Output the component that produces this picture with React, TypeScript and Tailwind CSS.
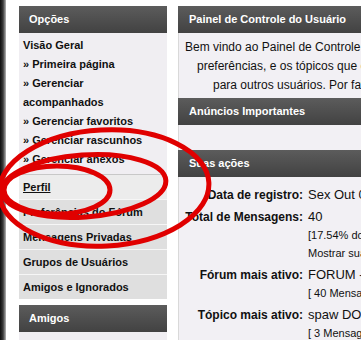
import React from "react";

const headerCls =
  "flex h-[27px] items-center bg-gradient-to-b from-[#5c5c5c] to-[#424242] text-[11px] font-bold text-white";

const menuRows = [
  { label: "Preferências do Fórum" },
  { label: "Mensagens Privadas" },
  { label: "Grupos de Usuários" },
  { label: "Amigos e Ignorados" },
];

function Sidebar() {
  return (
    <aside className="w-[148px] shrink-0">
      <div className={`${headerCls} pl-[10px]`}>Opções</div>
      <ul className="bg-[#f0eef2] px-[4px] pt-[3px] pb-[5px] text-[11px] font-bold leading-[19px]">
        <li>Visão Geral</li>
        <li>» Primeira página</li>
        <li>
          » Gerenciar
          <br />
          acompanhados
        </li>
        <li>» Gerenciar favoritos</li>
        <li>» Gerenciar rascunhos</li>
        <li>» Gerenciar anexos</li>
      </ul>
      <div className="flex h-[25px] items-center border-t border-[#c8c8c8] bg-[#ececec] px-[4px] text-[11px] font-bold underline">
        Perfil
      </div>
      {menuRows.map((r) => (
        <div
          key={r.label}
          className="flex h-[25px] items-center border-t border-[#f6f6f6] bg-[#dfdfdf] px-[4px] text-[11px] font-bold"
        >
          {r.label}
        </div>
      ))}
      <div className={`${headerCls} mt-[6px] pl-[10px]`}>Amigos</div>
      <div className="h-[20px] bg-[#f0eef2]" />
    </aside>
  );
}

const stats = [
  { label: "Data de registro:", lines: ["Sex Out 09, 2009 2:13 pm"] },
  {
    label: "Total de Mensagens:",
    lines: ["40", "[17.54% do total / 0.09 mensagens por dia]", "Mostrar suas mensagens"],
  },
  { label: "Fórum mais ativo:", lines: ["FORUM - Geral", "[ 40 Mensagens / 100.00% de suas mensagens ]"] },
  { label: "Tópico mais ativo:", lines: ["spaw DOWNLOAD", "[ 3 Mensagens / 7.50% de suas mensagens ]"] },
];

function Main() {
  return (
    <main className="w-[560px] shrink-0">
      <div className={`${headerCls} pl-[11px]`}>Painel de Controle do Usuário</div>
      <div className="border-l border-[#d9d9d9] bg-[#f2f0f4] pt-[5px] pb-[3px] text-[12px] leading-[19px] whitespace-nowrap">
        <p className="pl-[6px]">
          Bem vindo ao Painel de Controle do Usuário. Aqui você pode monitorar, ver e atualizar seu perfil,
        </p>
        <p className="pl-[18px]">
          preferências, e os tópicos que está acompanhando. Você também pode enviar mensagens
        </p>
        <p className="pl-[34px]">para outros usuários. Por favor, escolha uma opção no menu.</p>
      </div>
      <div className={`${headerCls} pl-[11px]`}>Anúncios Importantes</div>
      <div className="h-[25px] border-l border-[#d9d9d9] bg-[#f2f0f4]" />
      <div className={`${headerCls} pl-[11px]`}>Suas ações</div>
      <div className="border-l border-[#d9d9d9] bg-[#f2f0f4] pt-[7px] pb-[10px]">
        {stats.map((s) => (
          <div key={s.label} className="flex gap-[5px] py-[2px] leading-[18px] whitespace-nowrap">
            <div className="w-[124px] shrink-0 text-right text-[12px] font-bold">{s.label}</div>
            <div>
              {s.lines.map((l, i) => (
                <div key={i} className={i === 0 ? "text-[13px]" : "text-[11px]"}>
                  {l}
                </div>
              ))}
            </div>
          </div>
        ))}
      </div>
    </main>
  );
}

export default function App() {
  return (
    <div className="relative h-[340px] w-[361px] overflow-hidden bg-white font-['Liberation_Sans',Arial,sans-serif] text-[#111]">
      <div className="flex h-full">
        <div className="w-[6px] shrink-0 bg-gradient-to-r from-[#0d0d0d] via-[#3a3a3a] to-[#b8b8b8]" />
        <div className="flex gap-[11px] pl-[13px] pt-[6px]">
          <Sidebar />
          <Main />
        </div>
      </div>
      {/* red hand-drawn marks around "Perfil" */}
      <svg className="pointer-events-none absolute inset-0" width="361" height="340" viewBox="0 0 361 340">
        <g fill="none" stroke="#e00000" strokeWidth="5" strokeLinecap="round">
          <ellipse cx="104" cy="188" rx="105" ry="58" transform="rotate(-3 104 188)" />
          <ellipse cx="84" cy="186" rx="82" ry="31" transform="rotate(-4 84 186)" />
          <ellipse cx="57" cy="190" rx="53" ry="24" />
        </g>
      </svg>
    </div>
  );
}
